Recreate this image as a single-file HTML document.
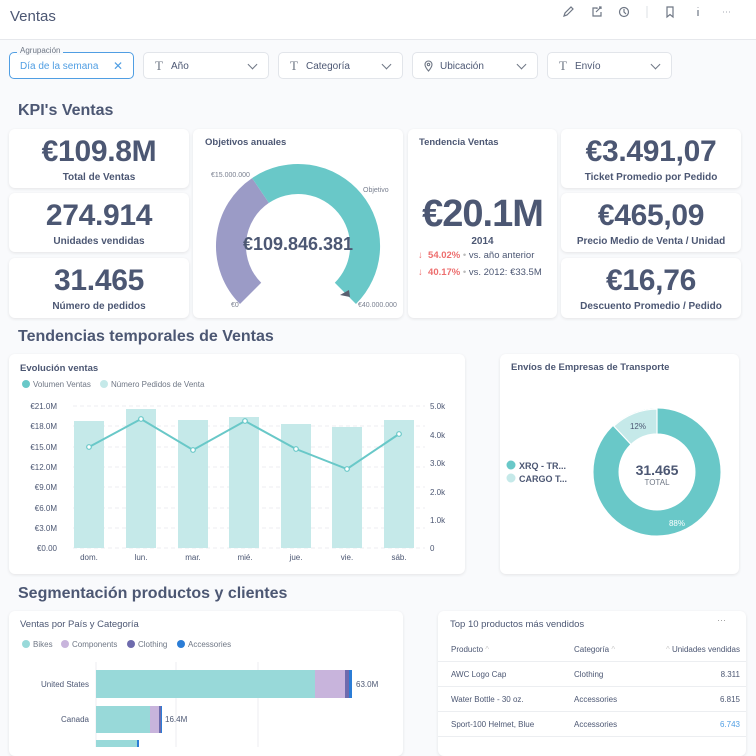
<!DOCTYPE html>
<html><head><meta charset="utf-8"><style>
*{box-sizing:border-box;margin:0;padding:0}
body{width:756px;height:747px;overflow:hidden;background:#f9fafc;font-family:"Liberation Sans",sans-serif;color:#4c5773;position:relative}
.a{position:absolute}
.card{position:absolute;background:#fff;border-radius:6px;box-shadow:0 1px 3px rgba(0,0,0,.09)}
.kpi{text-align:center}
.kpi .n{font-size:30px;font-weight:bold;color:#4c5773;letter-spacing:-0.3px;margin-top:6px;line-height:34px}
.kpi .l{font-size:10px;font-weight:bold;color:#4c5773;margin-top:3px}
.f{position:absolute;top:52px;height:27px;border:1px solid #e2e5ea;border-radius:5px;background:#fff;font-size:10px;color:#4c5773;padding:8px 0 0 27px}
.f .ic{position:absolute;left:11px;top:5px;font-size:13px;color:#6f7785;font-family:"Liberation Serif",serif}
.f .ch{position:absolute;right:12px;top:8px;width:7px;height:7px;border-right:1.3px solid #6f7785;border-bottom:1.3px solid #6f7785;transform:rotate(45deg)}
h2{position:absolute;left:18px;font-size:16px;font-weight:bold;color:#4c5773}
.t{font-size:9.5px;font-weight:bold;color:#4c5773}
</style></head><body>
<div class="a" style="left:0;top:0;width:756px;height:40px;background:#fff;border-bottom:1px solid #e6e8ec"></div>
<div class="a" style="left:10px;top:8px;font-size:15px;color:#4c5773">Ventas</div>
<svg class="a" style="left:560px;top:4px" width="190" height="16" viewBox="0 0 190 16" fill="none" stroke="#6f7785" stroke-width="1.2">
<path d="M4 12l1-3 6-6 2 2-6 6z"/>
<path d="M37 5v-1h-4v8h8v-4M36 8l5-5M39 3h2v2"/>
<circle cx="64" cy="8" r="4.5"/><path d="M64 5v3l2 2"/>
<path d="M87 2v12" stroke="#e2e5ea"/>
<path d="M107 3h6v10l-3-2.5-3 2.5z"/>
<path d="M138 6v6M138 3.5v.5"/>
<path d="M163 8h.5M166 8h.5M169 8h.5"/>
</svg>
<div class="f" style="left:9px;width:125px;border-color:#509ee3;color:#509ee3;padding-left:10px;padding-top:8px">Día de la semana<span style="position:absolute;right:10px;top:6px;font-size:12px">✕</span></div>
<div class="a" style="left:17px;top:46px;background:#f9fafc;font-size:8px;color:#6f7785;padding:0 3px">Agrupación</div>
<div class="f" style="left:143px;width:126px"><span class="ic">T</span>Año<span class="ch"></span></div>
<div class="f" style="left:278px;width:125px"><span class="ic">T</span>Categoría<span class="ch"></span></div>
<div class="f" style="left:412px;width:126px"><svg style="position:absolute;left:11px;top:7px" width="9" height="12" viewBox="0 0 9 12" fill="none" stroke="#6f7785" stroke-width="1.1"><path d="M4.5 11C1 7 1 5.5 1 4.5a3.5 3.5 0 017 0c0 1-0 2.5-3.5 6.5z"/><circle cx="4.5" cy="4.5" r="1.2"/></svg>Ubicación<span class="ch"></span></div>
<div class="f" style="left:547px;width:125px"><span class="ic">T</span>Envío<span class="ch"></span></div>

<h2 style="top:102px">KPI's Ventas</h2>
<div class="card kpi" style="left:9px;top:129px;width:180px;height:59px"><div class="n">€109.8M</div><div class="l">Total de Ventas</div></div>
<div class="card kpi" style="left:9px;top:193px;width:180px;height:59px"><div class="n">274.914</div><div class="l">Unidades vendidas</div></div>
<div class="card kpi" style="left:9px;top:258px;width:180px;height:60px"><div class="n">31.465</div><div class="l">Número de pedidos</div></div>
<div class="card kpi" style="left:561px;top:129px;width:180px;height:59px"><div class="n">€3.491,07</div><div class="l">Ticket Promedio por Pedido</div></div>
<div class="card kpi" style="left:561px;top:193px;width:180px;height:59px"><div class="n">€465,09</div><div class="l">Precio Medio de Venta / Unidad</div></div>
<div class="card kpi" style="left:561px;top:258px;width:180px;height:60px"><div class="n">€16,76</div><div class="l">Descuento Promedio / Pedido</div></div>

<div class="card" style="left:193px;top:129px;width:210px;height:189px"></div>
<div class="a t" style="left:205px;top:137px">Objetivos anuales</div>
<svg class="a" style="left:193px;top:129px" width="210" height="189" viewBox="193 129 210 189">
<path d="M250.6 293.4A67 67 0 0 1 260.5 190.5" stroke="#9b9bc6" stroke-width="30" fill="none"/>
<path d="M260.5 190.5A67 67 0 0 1 345.4 293.4" stroke="#69c8c8" stroke-width="30" fill="none"/>
<path d="M340 295l9-5 1 7z" fill="#5a6070"/>
<text x="298" y="250" text-anchor="middle" font-size="18" font-weight="bold" fill="#4c5773" font-family="Liberation Sans">€109.846.381</text>
<g font-size="7" fill="#7a8090" font-family="Liberation Sans"><text x="211" y="177">€15.000.000</text><text x="363" y="192">Objetivo</text><text x="231" y="307">€0</text><text x="358" y="307">€40.000.000</text></g>
</svg>

<div class="card" style="left:408px;top:129px;width:149px;height:189px"></div>
<div class="a t" style="left:419px;top:137px">Tendencia Ventas</div>
<div class="a" style="left:408px;top:193px;width:149px;text-align:center;font-size:38px;font-weight:bold;color:#4c5773;letter-spacing:-1px">€20.1M</div>
<div class="a" style="left:408px;top:236px;width:149px;text-align:center;font-size:10px;font-weight:bold">2014</div>
<div class="a" style="left:418px;top:250px;font-size:9.5px"><span style="color:#ed6e6e">↓ &nbsp;<b>54.02%</b></span> <span style="color:#bbb">•</span> vs. año anterior</div>
<div class="a" style="left:418px;top:267px;font-size:9.5px"><span style="color:#ed6e6e">↓ &nbsp;<b>40.17%</b></span> <span style="color:#bbb">•</span> vs. 2012: €33.5M</div>

<h2 style="top:328px">Tendencias temporales de Ventas</h2>
<div class="card" style="left:9px;top:354px;width:456px;height:220px"></div>
<div class="a t" style="left:20px;top:363px">Evolución ventas</div>
<svg class="a" style="left:9px;top:354px" width="456" height="220" viewBox="9 354 456 220" font-family="Liberation Sans">
<circle cx="26" cy="384" r="4" fill="#69c8c8"/><text x="33" y="387" font-size="8" fill="#6f7785">Volumen Ventas</text>
<circle cx="104" cy="384" r="4" fill="#c5e9e9"/><text x="111" y="387" font-size="8" fill="#6f7785">Número Pedidos de Venta</text>
<g stroke="#eceef1" stroke-dasharray="4 3"><path d="M73 406H425M73 426H425M73 447H425M73 467H425M73 487H425M73 508H425M73 528H425M73 548H425"/></g>
<g fill="#c5e9e9"><rect x="74" y="421" width="30" height="127"/><rect x="126" y="409" width="30" height="139"/><rect x="178" y="420" width="30" height="128"/><rect x="229" y="417" width="30" height="131"/><rect x="281" y="424" width="30" height="124"/><rect x="332" y="427" width="30" height="121"/><rect x="384" y="420" width="30" height="128"/></g>
<polyline points="89,447 141,419 193,450 245,421 296,449 347,469 399,434" fill="none" stroke="#69c8c8" stroke-width="2"/>
<g fill="#fff" stroke="#69c8c8" stroke-width="1.2"><circle cx="89" cy="447" r="2.3"/><circle cx="141" cy="419" r="2.3"/><circle cx="193" cy="450" r="2.3"/><circle cx="245" cy="421" r="2.3"/><circle cx="296" cy="449" r="2.3"/><circle cx="347" cy="469" r="2.3"/><circle cx="399" cy="434" r="2.3"/></g>
<g font-size="8" fill="#4c5773" text-anchor="end"><text x="57" y="409">€21.0M</text><text x="57" y="429">€18.0M</text><text x="57" y="450">€15.0M</text><text x="57" y="470">€12.0M</text><text x="57" y="490">€9.0M</text><text x="57" y="511">€6.0M</text><text x="57" y="531">€3.0M</text><text x="57" y="551">€0.00</text></g>
<g font-size="8" fill="#4c5773"><text x="430" y="409">5.0k</text><text x="430" y="438">4.0k</text><text x="430" y="466">3.0k</text><text x="430" y="495">2.0k</text><text x="430" y="523">1.0k</text><text x="430" y="551">0</text></g>
<g font-size="8" fill="#4c5773" text-anchor="middle"><text x="89" y="560">dom.</text><text x="141" y="560">lun.</text><text x="193" y="560">mar.</text><text x="245" y="560">mié.</text><text x="296" y="560">jue.</text><text x="347" y="560">vie.</text><text x="399" y="560">sáb.</text></g>
</svg>

<div class="card" style="left:500px;top:354px;width:239px;height:220px"></div>
<div class="a t" style="left:511px;top:362px">Envíos de Empresas de Transporte</div>
<svg class="a" style="left:500px;top:354px" width="239" height="220" viewBox="500 354 239 220" font-family="Liberation Sans">
<circle cx="657" cy="472" r="51" fill="none" stroke="#69c8c8" stroke-width="25"/>
<path d="M657 409A63 63 0 0 0 613.8 426.1L631.1 444.5A38 38 0 0 1 657 434Z" fill="#c5e9e9" stroke="#fff" stroke-width="1.2"/>
<text x="657" y="475" text-anchor="middle" font-size="14" font-weight="bold" fill="#4c5773">31.465</text>
<text x="657" y="485" text-anchor="middle" font-size="8" fill="#6f7785">TOTAL</text>
<text x="638" y="429" text-anchor="middle" font-size="8" fill="#4c5773">12%</text>
<text x="677" y="526" text-anchor="middle" font-size="8" fill="#fff">88%</text>
<circle cx="511" cy="465" r="4.5" fill="#69c8c8"/><text x="519" y="469" font-size="9" font-weight="bold" fill="#4c5773">XRQ - TR...</text>
<circle cx="511" cy="478" r="4.5" fill="#c5e9e9"/><text x="519" y="482" font-size="9" font-weight="bold" fill="#4c5773">CARGO T...</text>
</svg>

<h2 style="top:585px">Segmentación productos y clientes</h2>
<div class="card" style="left:9px;top:611px;width:394px;height:145px"></div>
<div class="a" style="left:20px;top:619px;font-size:9.5px">Ventas por País y Categoría</div>
<svg class="a" style="left:9px;top:611px" width="394" height="136" viewBox="9 611 394 136" font-family="Liberation Sans">
<g font-size="8" fill="#6f7785"><circle cx="26" cy="644" r="4" fill="#98d9d9"/><text x="33" y="647">Bikes</text><circle cx="65" cy="644" r="4" fill="#c8b4dc"/><text x="72" y="647">Components</text><circle cx="131" cy="644" r="4" fill="#6e6bad"/><text x="138" y="647">Clothing</text><circle cx="181" cy="644" r="4" fill="#2b7dd6"/><text x="188" y="647">Accessories</text></g>
<path d="M96 662V747M176 662V747M258 662V747" stroke="#eceef1"/>
<rect x="96" y="670" width="219" height="28" fill="#98d9d9"/><rect x="315" y="670" width="30" height="28" fill="#c8b4dc"/><rect x="345" y="670" width="4" height="28" fill="#6e6bad"/><rect x="349" y="670" width="3" height="28" fill="#2b7dd6"/>
<rect x="96" y="706" width="54" height="27" fill="#98d9d9"/><rect x="150" y="706" width="9" height="27" fill="#c8b4dc"/><rect x="159" y="706" width="2" height="27" fill="#6e6bad"/><rect x="161" y="706" width="1" height="27" fill="#2b7dd6"/>
<rect x="96" y="740" width="41" height="10" fill="#98d9d9"/><rect x="137" y="740" width="2" height="10" fill="#2b7dd6"/>
<g font-size="8" fill="#4c5773"><text x="89" y="687" text-anchor="end">United States</text><text x="89" y="722" text-anchor="end">Canada</text><text x="356" y="687">63.0M</text><text x="165" y="722">16.4M</text></g>
</svg>

<div class="card" style="left:438px;top:611px;width:308px;height:145px"></div>
<div class="a" style="left:450px;top:619px;font-size:9.5px">Top 10 productos más vendidos</div>
<div class="a" style="left:717px;top:615px;font-size:9px;color:#999">···</div>
<div class="a" style="left:438px;top:643px;width:308px;font-size:8px;color:#4c5773">
<div style="position:relative;height:19px;border-bottom:1px solid #eceef1"><span class="a" style="left:13px;top:2px">Producto <span style="color:#ccc">^</span></span><span class="a" style="left:136px;top:2px">Categoría <span style="color:#ccc">^</span></span><span class="a" style="right:6px;top:2px"><span style="color:#ccc">^</span> Unidades vendidas</span></div>
<div style="position:relative;height:25px;border-bottom:1px solid #eceef1"><span class="a" style="left:13px;top:8px">AWC Logo Cap</span><span class="a" style="left:136px;top:8px">Clothing</span><span class="a" style="right:6px;top:8px">8.311</span></div>
<div style="position:relative;height:25px;border-bottom:1px solid #eceef1"><span class="a" style="left:13px;top:8px">Water Bottle - 30 oz.</span><span class="a" style="left:136px;top:8px">Accessories</span><span class="a" style="right:6px;top:8px">6.815</span></div>
<div style="position:relative;height:25px;border-bottom:1px solid #eceef1"><span class="a" style="left:13px;top:8px">Sport-100 Helmet, Blue</span><span class="a" style="left:136px;top:8px">Accessories</span><span class="a" style="right:6px;top:8px;color:#509ee3">6.743</span></div>
</div>
</body></html>
